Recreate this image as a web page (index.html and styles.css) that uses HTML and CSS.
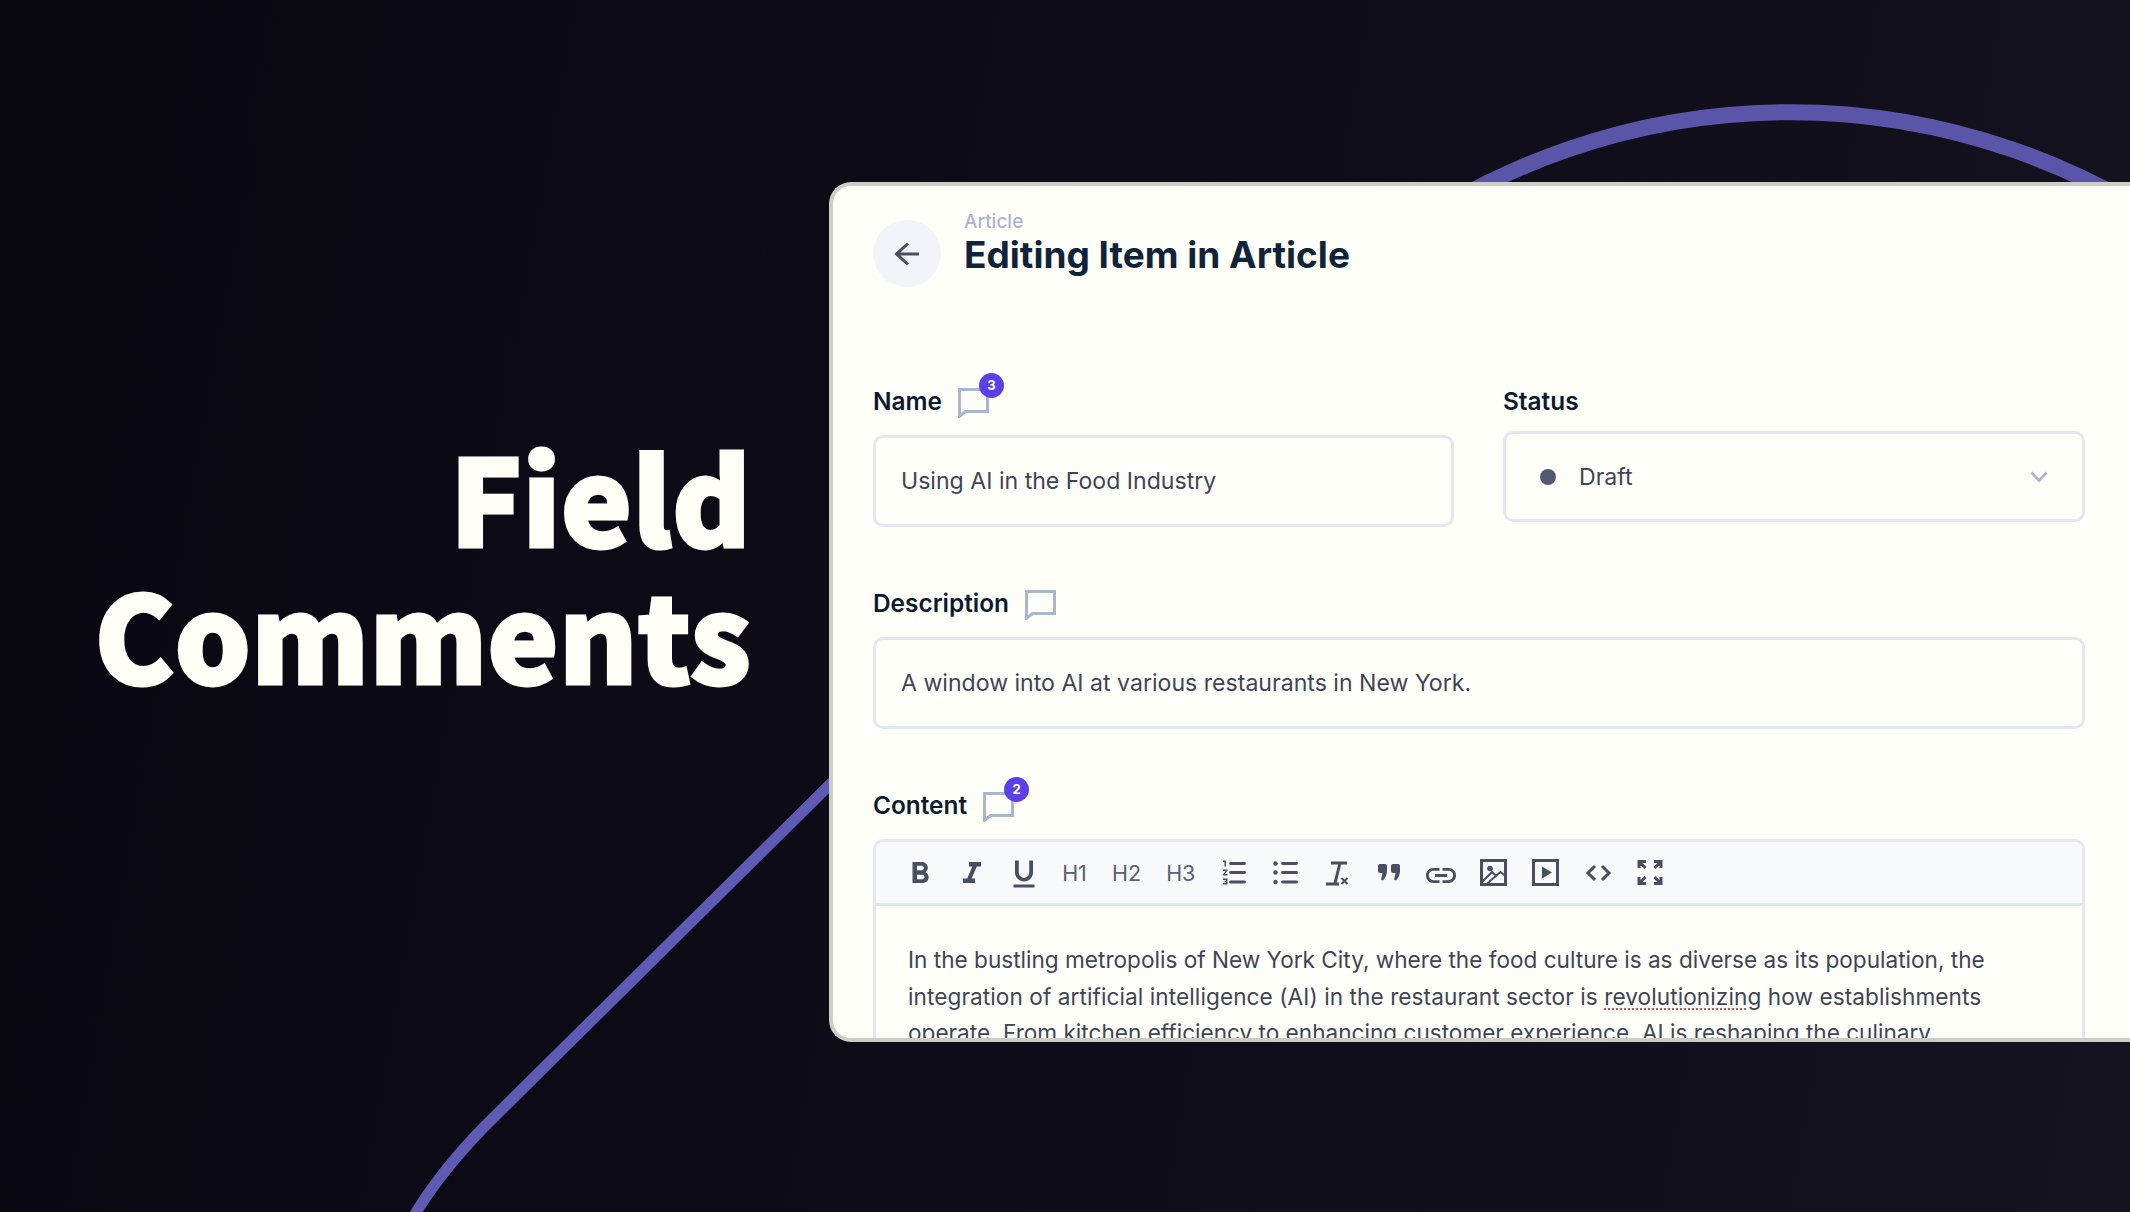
FILE: index.html
```html
<!DOCTYPE html>
<html lang="en">
<head>
    <meta charset="UTF-8">
    <title>Field Comments</title>
    <link rel="stylesheet" href="styles.css">
</head>
<body>
    <svg class="deco" width="2130" height="1212" viewBox="0 0 2130 1212" fill="none">
        <path class="deco-arc" d="M1379 250A682 682 0 0 1 2201 250"/>
        <path class="deco-line" d="M880 735L484 1127C452 1160 428 1190 408 1226"/>
    </svg>

    <div class="stage">
        <h1 class="hero">Field<br>Comments</h1>

        <div class="card">
            <div class="page-head">
                <div class="back-btn">
                    <svg width="26" height="24" viewBox="0 0 26 24" fill="none" stroke="currentColor" stroke-width="3"><path d="M14 1.5L2.5 12 14 22.5M2.5 12H25"/></svg>
                </div>
                <div class="page-titles">
                    <div class="crumb">Article</div>
                    <div class="page-title">Editing Item in Article</div>
                </div>
            </div>

            <div class="row-two">
                <div class="field">
                    <div class="field-label">Name
                        <span class="comment">
                            <svg width="31" height="30" viewBox="0 0 31 30" fill="none" stroke="currentColor" stroke-width="3"><path d="M1.5 1.5H29.5V23.5H7.5L1.5 28.5Z"/></svg>
                            <span class="badge">3</span>
                        </span>
                    </div>
                    <div class="input">Using AI in the Food Industry</div>
                </div>
                <div class="field">
                    <div class="field-label label-tight">Status</div>
                    <div class="input select">
                        <span class="dot"></span>
                        <span class="select-text">Draft</span>
                        <svg width="18" height="12" viewBox="0 0 18 12" fill="none" stroke="currentColor" stroke-width="2.6"><path d="M1.5 1.5L9 9.5 16.5 1.5"/></svg>
                    </div>
                </div>
            </div>

            <div class="field field-wide">
                <div class="field-label">Description
                    <span class="comment">
                        <svg width="31" height="30" viewBox="0 0 31 30" fill="none" stroke="currentColor" stroke-width="3"><path d="M1.5 1.5H29.5V23.5H7.5L1.5 28.5Z"/></svg>
                    </span>
                </div>
                <div class="input">A window into AI at various restaurants in New York.</div>
            </div>

            <div class="field field-wide">
                <div class="field-label">Content
                    <span class="comment">
                        <svg width="31" height="30" viewBox="0 0 31 30" fill="none" stroke="currentColor" stroke-width="3"><path d="M1.5 1.5H29.5V23.5H7.5L1.5 28.5Z"/></svg>
                        <span class="badge">2</span>
                    </span>
                </div>
                <div class="editor">
                    <div class="toolbar">
                        <span class="tool"><svg viewBox="0 0 24 24"><path d="M15.6 10.79c.97-.67 1.65-1.77 1.65-2.79 0-2.26-1.75-4-4-4H7v14h7.04c2.09 0 3.71-1.7 3.71-3.79 0-1.52-.86-2.82-2.15-3.42zM10 6.5h3c.83 0 1.5.67 1.5 1.5s-.67 1.5-1.5 1.5h-3v-3zm3.5 9H10v-3h3.5c.83 0 1.5.67 1.5 1.5s-.67 1.5-1.5 1.5z"/></svg></span>
                        <span class="tool"><svg viewBox="0 0 24 24"><path d="M10 4v3h2.21l-3.42 8H6v3h8v-3h-2.21l3.42-8H18V4z"/></svg></span>
                        <span class="tool"><svg viewBox="0 0 24 24"><path d="M12 17c3.31 0 6-2.69 6-6V3h-2.5v8c0 1.93-1.57 3.5-3.5 3.5S8.5 12.93 8.5 11V3H6v8c0 3.31 2.69 6 6 6zm-7 2v2h14v-2H5z"/></svg></span>
                        <span class="tool tool-text tool-text-left">H1</span>
                        <span class="tool tool-text tool-text-left">H2</span>
                        <span class="tool tool-text">H3</span>
                        <span class="tool"><svg viewBox="0 0 36 36"><path transform="translate(5 -1.5) scale(1.5)" d="M2 17h2v.5H3v1h1v.5H2v1h3v-4H2v1zm1-9h1V4H2v1h1v3zm-1 3h1.8L2 13.1v.9h3v-1H3.2L5 10.9V10H2v1z"/><path class="line" d="M15.5 7.5H29.5M15.5 16.5H29.5M15.5 26H29.5"/></svg></span>
                        <span class="tool"><svg viewBox="0 0 36 36"><circle cx="8.5" cy="7.5" r="2.2"/><circle cx="8.5" cy="16.5" r="2.2"/><circle cx="8.5" cy="26" r="2.2"/><path class="line" d="M15.5 7.5H29.5M15.5 16.5H29.5M15.5 26H29.5"/></svg></span>
                        <span class="tool"><svg viewBox="0 0 36 36"><path class="line line-sharp" d="M12 7H28M21 7L16 27M7 28H20"/><path class="line line-thin" d="M22.5 22L28.5 28M28.5 22L22.5 28"/></svg></span>
                        <span class="tool"><svg viewBox="0 0 36 36"><path d="M7 10Q7 8 9 8H14Q16 8 16 10V15Q16 20 12 24.5L10 23.5Q11 20 11.5 17H9Q7 17 7 15ZM20 10Q20 8 22 8H27Q29 8 29 10V15Q29 20 25 24.5L23 23.5Q24 20 24.5 17H22Q20 17 20 15Z"/></svg></span>
                        <span class="tool"><svg viewBox="0 0 24 24"><path transform="translate(0 1)" d="M3.9 12c0-1.71 1.39-3.1 3.1-3.1h4V7H7c-2.76 0-5 2.24-5 5s2.24 5 5 5h4v-1.9H7c-1.71 0-3.1-1.39-3.1-3.1zM8 13h8v-2H8v2zm9-6h-4v1.9h4c1.71 0 3.1 1.39 3.1 3.1s-1.39 3.1-3.1 3.1h-4V17h4c2.76 0 5-2.24 5-5s-2.24-5-5-5z"/></svg></span>
                        <span class="tool"><svg viewBox="0 0 36 36"><rect class="line line-sharp" x="5.5" y="4.5" width="24" height="24"/><circle cx="14" cy="12.5" r="2.8"/><path class="line line-thin" d="M5 27L16 16 21 20.5M10 28.5L24.5 16 30 20.5"/></svg></span>
                        <span class="tool"><svg viewBox="0 0 36 36"><rect class="line line-sharp" x="5.5" y="4.5" width="24" height="24"/><path d="M14 10.5L24 16.5 14 22.5Z"/></svg></span>
                        <span class="tool"><svg viewBox="0 0 36 36"><path class="line line-sharp" d="M15 10L8 17 15 24M22 10L29 17 22 24"/></svg></span>
                        <span class="tool"><svg viewBox="0 0 36 36"><path class="line line-sharp" d="M7 12V5.5H14M7.5 6L13.5 12M29 12V5.5H22M28.5 6L22.5 12M7 21V27.5H14M7.5 27L13.5 21M29 21V27.5H22M28.5 27L22.5 21"/></svg></span>
                    </div>
                    <div class="editor-body">In the bustling metropolis of New York City, where the food culture is as diverse as its population, the <span class="loose">integration of artificial intelligence (AI) in the restaurant sector is <span class="misspelt">revolutionizing</span> how establishments</span> operate. From kitchen efficiency to enhancing customer experience, AI is reshaping the culinary landscape.</div>
                </div>
            </div>
        </div>
    </div>
</body>
</html>
```

FILE: styles.css
```css
html, body {
    margin: 0;
    padding: 0;
    height: 100%;
    overflow: hidden;
    background: linear-gradient(100deg, #090811 0%, #0d0b16 40%, #14121f 100%);
    font-family: Inter, 'Liberation Sans', sans-serif;
}
.deco {
    position: absolute;
    top: 0;
    left: 0;
}
.deco-arc {
    stroke: #5a55a8;
    stroke-width: 16;
}
.deco-line {
    stroke: #5f5bb5;
    stroke-width: 11;
}
.stage {
    position: relative;
    display: flex;
    align-items: flex-start;
    height: 1212px;
    padding-left: 40px;
}
.hero {
    flex: 0 0 711px;
    margin: 427px 0 0 0;
    text-align: right;
    color: #fffff8;
    font-family: 'Noto Sans CJK JP', 'Noto Sans', sans-serif;
    font-size: 120px;
    font-weight: 900;
    line-height: 137px;
    -webkit-text-stroke: 3px #fffff8;
}
.card {
    flex: 0 0 1400px;
    box-sizing: border-box;
    height: 860px;
    margin: 182px 0 0 78px;
    padding: 34px 0 0 40px;
    background: #fffffa;
    border: 4px solid #cccdc6;
    border-right: none;
    border-radius: 22px 0 0 22px;
    overflow: hidden;
}
.page-head {
    display: flex;
    align-items: center;
    gap: 23px;
    height: 67px;
    margin-bottom: 97px;
}
.back-btn {
    display: flex;
    align-items: center;
    justify-content: center;
    width: 68px;
    height: 67px;
    border-radius: 50%;
    background: #f1f5f9;
    color: #4a4e63;
}
.page-titles {
    margin-top: -7px;
}
.crumb {
    color: #a9b6cd;
    font-size: 19px;
    font-weight: 500;
    line-height: 22px;
    margin-top: -13px;
}
.page-title {
    color: #10233a;
    font-size: 37px;
    font-weight: 700;
    line-height: 44px;
}
.row-two {
    display: grid;
    grid-template-columns: 581px 582px;
    column-gap: 49px;
    width: 1212px;
}
.field-wide {
    width: 1212px;
    margin-top: 59px;
}
.field-label {
    display: flex;
    align-items: center;
    gap: 16px;
    height: 34px;
    margin-bottom: 17px;
    color: #0c1a30;
    font-size: 24.4px;
    font-weight: 600;
}
.label-tight {
    margin-bottom: 13px;
}
.comment {
    position: relative;
    display: flex;
    color: #a9b6cd;
    margin-top: 4px;
}
.badge {
    position: absolute;
    top: -15px;
    right: -15px;
    width: 25px;
    height: 25px;
    border-radius: 50%;
    background: #5b3fea;
    color: #fff;
    font-size: 13px;
    font-weight: 700;
    line-height: 25px;
    text-align: center;
}
.input {
    box-sizing: border-box;
    display: flex;
    align-items: center;
    height: 92px;
    padding: 0 25px;
    border: 3px solid #e2e8f0;
    border-radius: 10px;
    color: #3f4456;
    font-size: 23.1px;
}
.select {
    height: 91px;
    padding: 0 34px 0 34px;
}
.select svg {
    color: #a9b6cd;
}
.dot {
    width: 16px;
    height: 16px;
    border-radius: 50%;
    background: #53586f;
    margin-right: 23px;
}
.select-text {
    flex: 1;
}
.editor {
    border: 3px solid #e2e8f0;
    border-radius: 10px;
}
.toolbar {
    display: flex;
    align-items: center;
    height: 61px;
    padding-left: 18px;
    background: #f7f9fb;
    border-bottom: 3px solid #e2e8f0;
    border-radius: 7px 7px 0 0;
}
.tool {
    box-sizing: border-box;
    display: flex;
    align-items: center;
    justify-content: center;
    width: 52.15px;
    color: #4a4e63;
}
.tool svg {
    width: 36px;
    height: 36px;
    margin-top: 2px;
    fill: currentColor;
}
.tool .line {
    fill: none;
    stroke: currentColor;
    stroke-width: 2.8;
    stroke-linecap: round;
}
.tool .line-sharp {
    stroke-width: 3;
    stroke-linecap: butt;
}
.tool .line-thin {
    stroke-width: 2;
    stroke-linecap: butt;
}
.tool-text {
    color: #5a5f73;
    font-size: 21.5px;
    font-weight: 400;
}
.tool-text-left {
    padding-right: 4px;
}
.editor-body {
    padding: 36px 35px 0 32px;
    color: #3f4456;
    font-size: 22.6px;
    line-height: 36.6px;
}
.loose {
    letter-spacing: 0.08px;
}
.misspelt {
    text-decoration: underline dotted #e5484d;
    text-decoration-thickness: 2px;
    text-underline-offset: 4px;
}
```
